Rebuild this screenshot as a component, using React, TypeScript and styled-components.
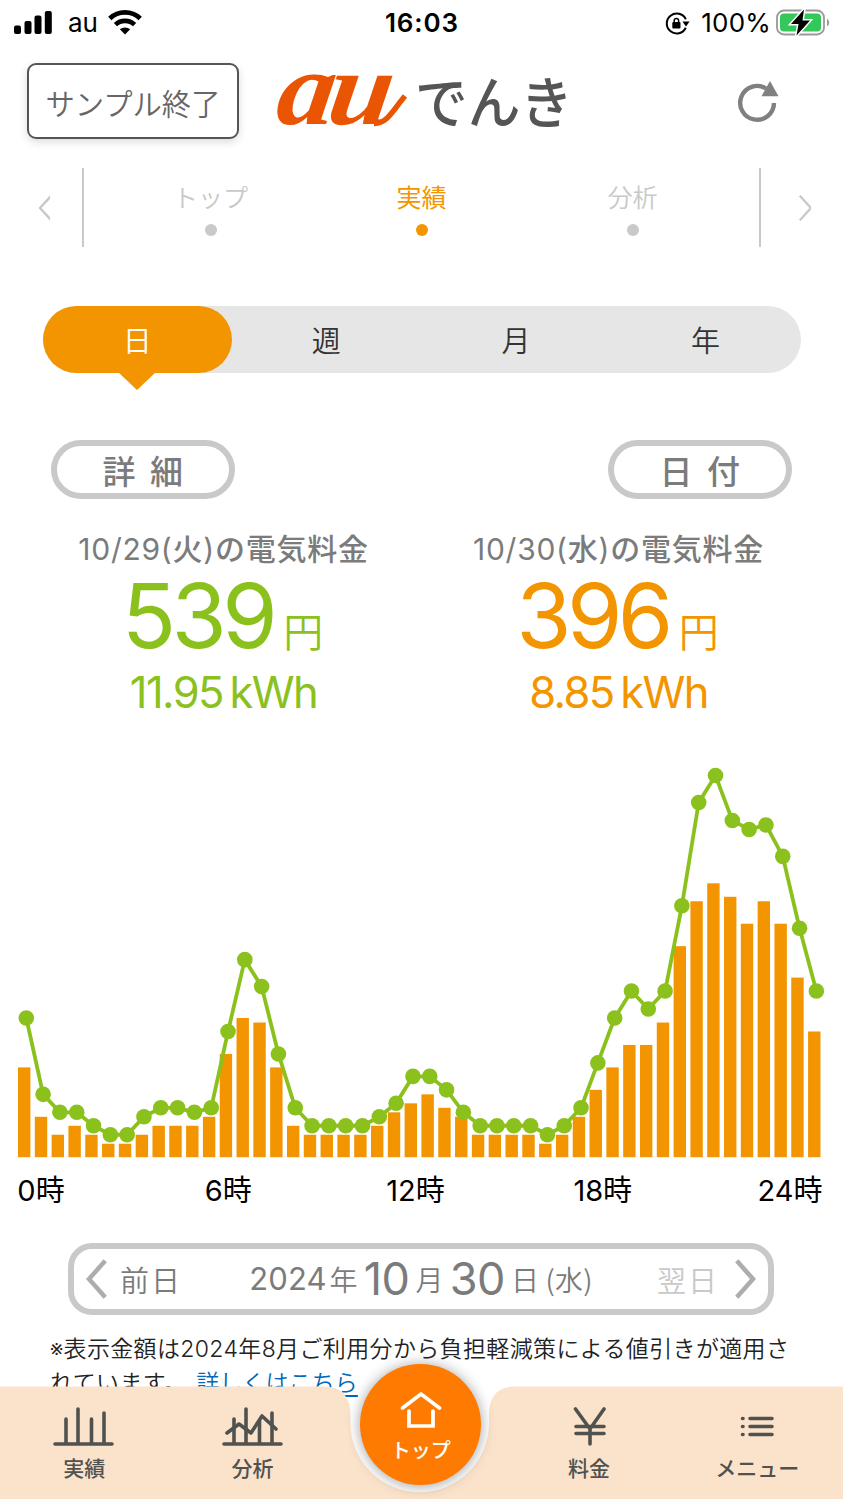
import React from 'react';
import styled, { createGlobalStyle } from 'styled-components';

const ORANGE = '#f39500';
const GREEN = '#8bc11d';

const GlobalStyle = createGlobalStyle`
  * { box-sizing: border-box; }
  html, body { margin: 0; padding: 0; background: #fff; }
  body {
    width: 843px; height: 1499px; overflow: hidden;
    font-family: Inter, "Noto Sans CJK JP", sans-serif;
    -webkit-font-smoothing: antialiased;
  }
  button { font: inherit; background: none; border: 0; padding: 0; margin: 0; color: inherit; }
`;

const Screen = styled.div`
  position: relative;
  width: 843px; height: 1499px; overflow: hidden;
  display: flex; flex-direction: column;
  background: #fff;
`;

const StatusBar = styled.header`
  height: 46px; flex: none;
  display: grid; grid-template-columns: 1fr auto 1fr; align-items: center;
  padding: 0 13px 0 14px;
  font-size: 27px; line-height: 46px; color: #000;
`;
const StatusSide = styled.div<{ $end?: boolean }>`
  display: flex; align-items: center; height: 46px;
  justify-content: ${p => (p.$end ? 'flex-end' : 'flex-start')};
`;
const Carrier = styled.span`margin: 0 10px 0 16px; font-size: 26px;`;
const Clock = styled.span`font-weight: 600; font-size: 26px; letter-spacing: 0.9px;`;
const Percent = styled.span`margin: 0 5px 0 11px; font-size: 26px; letter-spacing: 0.2px;`;

const Header = styled.div`
  height: 122px; flex: none;
  display: flex; align-items: flex-start;
  padding: 17px 62px 0 27px;
`;
const ExitButton = styled.button`
  width: 212px; height: 76px; flex: none;
  border: 2px solid #555; border-radius: 9px;
  box-shadow: 0 3px 8px rgba(0, 0, 0, 0.14);
  color: #666; font-size: 29.3px; font-weight: 350; padding-top: 2px;
  font-family: "Noto Sans CJK JP", sans-serif;
`;
const Logo = styled.svg`margin: 4px 0 0 32px; flex: none; overflow: visible;`;
const Refresh = styled.svg`margin: 15px 0 0 auto; flex: none;`;

const Pager = styled.nav`
  height: 79px; flex: none;
  display: grid; grid-template-columns: 82px 1fr 82px;
`;
const PagerArrow = styled.button<{ $side: 'left' | 'right' }>`
  display: flex; align-items: center;
  justify-content: ${p => (p.$side === 'left' ? 'flex-start' : 'flex-end')};
  padding: 0 32px 0 37px;
`;
const PagerTabs = styled.div`
  display: grid; grid-template-columns: 211px 211px 211px; justify-content: center;
  border: solid #c8c9c8; border-width: 0 2px;
`;
const PagerTab = styled.div<{ $active?: boolean }>`
  display: flex; flex-direction: column; align-items: center;
  padding-top: 11px;
  color: ${p => (p.$active ? ORANGE : '#c8c9c8')};
  font-family: "Noto Sans CJK JP", sans-serif;
  font-size: 25px; font-weight: ${p => (p.$active ? 400 : 350)};
  line-height: 34px;
  &::after {
    content: ''; width: 12px; height: 12px; border-radius: 50%;
    margin-top: 11px; background: currentColor;
  }
`;

const Segments = styled.div`
  width: 758px; height: 67px; margin: 59px 0 0 43px; flex: none;
  display: grid; grid-template-columns: 188.5px repeat(3, 189.6px);
  border-radius: 34px; background: #e6e6e6;
`;
const Segment = styled.button<{ $active?: boolean }>`
  position: relative;
  border-radius: 34px;
  background: ${p => (p.$active ? ORANGE : 'transparent')};
  color: ${p => (p.$active ? '#fff' : '#333')};
  font-family: "Noto Sans CJK JP", sans-serif; font-weight: 350;
  font-size: 29px; line-height: 67px;
  &::after {
    content: ''; display: ${p => (p.$active ? 'block' : 'none')};
    position: absolute; left: 75px; top: 66px;
    border: solid transparent; border-width: 18px 19px 0;
    border-top-color: ${ORANGE};
  }
`;

const PillRow = styled.div`
  display: flex; justify-content: space-between; flex: none;
  padding: 0 51px; margin-top: 67px;
`;
const Pill = styled.button`
  width: 184px; height: 59px;
  border: 6px solid #c8c9c8; border-radius: 30px;
  color: #7b7b7b; font-family: "Noto Sans CJK JP", sans-serif;
  font-size: 33px; font-weight: 500; line-height: 46px;
  letter-spacing: 14.5px; padding-left: 14px;
`;

const Totals = styled.div`
  display: grid; grid-template-columns: 395px 395px;
  padding-left: 26px; margin-top: 29px; height: 188px; flex: none;
`;
const Total = styled.section<{ $color: string }>`
  display: flex; flex-direction: column; align-items: center;
  color: ${p => p.$color};
`;
const TotalTitle = styled.h2`
  margin: 0; height: 42px; line-height: 42px;
  font-size: 30px; font-weight: 430; color: #7b7b7b; white-space: nowrap;
  letter-spacing: 0.75px;
`;
const TitleKanji = styled.span`
  font-family: "Noto Sans CJK JP", sans-serif; font-weight: 500; line-height: 1;
`;
const Price = styled.div`
  display: flex; align-items: baseline;
  height: 94px; line-height: 92px; font-size: 89.5px; letter-spacing: -4.6px;
`;
const Yen = styled.span`
  font-family: "Noto Sans CJK JP", sans-serif; font-weight: 350;
  font-size: 40px; line-height: 60px; letter-spacing: 0; margin: 0 2px 0 10px;
  position: relative; top: -1px;
`;
const Usage = styled.div`
  font-size: 43.5px; line-height: 56px; letter-spacing: -1.6px; word-spacing: -4px;
`;

const Chart = styled.svg`display: block; flex: none; margin-top: 43px;`;
const Axis = styled.div`
  display: flex; justify-content: space-between; flex: none;
  height: 64px; padding: 0 53px 0 41px;
  font-size: 29px; line-height: 65px; color: #000;
`;
const Tick = styled.span`
  width: 0; display: flex; justify-content: center; white-space: nowrap;
`;

const DatePicker = styled.div`
  width: 706px; height: 72px; margin: 21px 0 0 68px; flex: none;
  display: flex; align-items: center;
  border: 6px solid #c8c9c8; border-radius: 24px;
  padding: 0 12px; color: #7b7b7b;
  font-size: 29px; white-space: nowrap;
`;
const DayLabel = styled.span<{ $muted?: boolean }>`
  font-family: "Noto Sans CJK JP", sans-serif; font-weight: 350;
  font-size: 29px; letter-spacing: 2px; line-height: 58px;
  margin: ${p => (p.$muted ? '0 16px 0 0' : '0 0 0 13px')};
  color: ${p => (p.$muted ? '#c8c9c8' : '#7b7b7b')};
`;
const DateText = styled.div`
  display: flex; align-items: center; margin: 0 auto; padding-left: 3px;
  line-height: 58px; font-size: 31px; letter-spacing: 0.1px;
`;
const BigNumber = styled.b`font-size: 45px; font-weight: 400; letter-spacing: -0.5px; margin: 0 6px;`;
const Kanji = styled.span`
  font-family: "Noto Sans CJK JP", sans-serif; font-weight: 350; font-size: 28px;
  letter-spacing: 0.2px;
  &:first-of-type { margin-left: 3px; }
`;

const Note = styled.p`
  margin: 17px 0 0 50px; width: 760px; flex: none;
  font-family: Inter, "Noto Sans CJK JP", sans-serif;
  font-size: 23px; font-weight: 350; line-height: 34px; color: #222; white-space: nowrap;
  letter-spacing: 0.36px;
  a { color: #0068b7; text-decoration: underline; text-underline-offset: 4px; margin-left: 9px; letter-spacing: 0.1px; }
`;

const BottomBar = styled.nav`
  position: absolute; left: 0; bottom: 0; width: 843px; height: 140px;
`;
const BarShape = styled.svg`position: absolute; inset: 0;`;
const BarItems = styled.div`
  position: relative; height: 140px; padding-top: 27px;
  display: grid; grid-template-columns: repeat(5, 168.3px);
`;
const BarItem = styled.button`
  display: flex; flex-direction: column; align-items: center; justify-content: flex-start;
  color: #505250; font-family: "Noto Sans CJK JP", sans-serif;
  font-size: 21px; font-weight: 500; line-height: 32px;
  svg { display: block; margin-top: 20px; margin-bottom: 3px; }
`;
const HomeButton = styled.button`
  align-self: start; justify-self: center;
  width: 121px; height: 121px; border-radius: 50%; margin-top: -22px;
  background: #ff7a00; color: #fff;
  box-shadow: 0 1px 14px rgba(0, 0, 0, 0.38);
  display: flex; flex-direction: column; align-items: center;
  font-family: "Noto Sans CJK JP", sans-serif; font-size: 20px; font-weight: 500; line-height: 28px;
  svg { display: block; margin: 26px 0 8px; }
`;

const today = [20, 9, 5, 7, 5, 3, 3, 5, 7, 7, 7, 9, 23, 31, 30, 20, 7, 5, 5, 5, 5, 7, 10, 12,
  14, 11, 9, 5, 5, 5, 5, 3, 5, 9, 15, 20, 25, 25, 30, 47, 57, 61, 58, 52, 57, 52, 40, 28];
const yesterday = [31, 14, 10, 10, 7, 5, 5, 9, 11, 11, 10, 11, 28, 44, 38, 23, 11, 7, 7, 7, 7, 9, 12, 18,
  18, 15, 10, 7, 7, 7, 7, 5, 7, 11, 21, 31, 37, 33, 37, 56, 79, 85, 75, 73, 74, 67, 51, 37];

const UNIT = 4.49;
const STEP = 16.81;
const BASE = 398.2;

function UsageChart() {
  const points = yesterday.map((v, i) => ({ x: 26.3 + i * STEP, y: BASE - v * UNIT }));
  return (
    <Chart width="843" height="399" viewBox="0 0 843 399">
      {today.map((v, i) => (
        <rect key={i} x={18 + i * STEP} y={BASE - v * UNIT} width="12.4" height={v * UNIT} fill={ORANGE} />
      ))}
      <polyline points={points.map(p => `${p.x},${p.y}`).join(' ')} fill="none" stroke={GREEN} strokeWidth="3.8" strokeLinejoin="round" />
      {points.map((p, i) => <circle key={i} cx={p.x} cy={p.y} r="7.8" fill={GREEN} />)}
    </Chart>
  );
}

function Chevron({ dir, w, h, stroke, color }: { dir: 'left' | 'right'; w: number; h: number; stroke: number; color: string }) {
  const pts = dir === 'left' ? `${w - 1.8},1.8 3,${h / 2} ${w - 1.8},${h - 1.8}` : `1.8,1.8 ${w - 3},${h / 2} 1.8,${h - 1.8}`;
  return <svg width={w} height={h}><polyline points={pts} fill="none" stroke={color} strokeWidth={stroke} /></svg>;
}

function StatusIcons() {
  return (
    <>
      <svg width="25" height="25" viewBox="0 0 25 25">
        <path d="M20.8 8.2A10 10 0 1 0 20.8 16.8" fill="none" stroke="#000" strokeWidth="2" />
        <path d="M17.4 10.6h7.2l-3.6 5z" fill="#000" />
        <rect x="7.3" y="11" width="8.2" height="6.4" rx="1" fill="#000" />
        <path d="M9.2 11.5V9.6a2.2 2.2 0 0 1 4.4 0v1.9" fill="none" stroke="#000" strokeWidth="1.5" />
      </svg>
      <Percent>100%</Percent>
      <svg width="54" height="28" viewBox="0 0 54 28">
        <rect x="1" y="1.5" width="47" height="24" rx="7" fill="#fff" stroke="#999" strokeWidth="1.8" />
        <rect x="4" y="4.5" width="41" height="18" rx="4" fill="#34c759" />
        <path d="M51 9.5v8q2.2-1.4 2.2-4T51 9.5z" fill="#999" />
        <path d="M28 0.5L15 15H22.5L20.5 26.5L34 11.5H26.500z" fill="#000" stroke="#fff" strokeWidth="3" paintOrder="stroke" />
      </svg>
    </>
  );
}

export default function App() {
  return (
    <>
      <GlobalStyle />
      <Screen>
        <StatusBar>
          <StatusSide>
            <svg width="38" height="25" viewBox="0 0 38 25">
              <rect x="0" y="14.5" width="7" height="8.5" rx="2" />
              <rect x="10.5" y="10" width="7" height="13" rx="2" />
              <rect x="20.5" y="4.5" width="7" height="18.5" rx="2" />
              <rect x="30.8" y="0" width="7" height="23" rx="2" />
            </svg>
            <Carrier>au</Carrier>
            <svg width="34" height="26" viewBox="0 0 34 26">
              <path d="M1.8 8.5A22 22 0 0 1 32.2 8.5" fill="none" stroke="#000" strokeWidth="4.8" />
              <path d="M7.4 14.7A14 14 0 0 1 26.6 14.7" fill="none" stroke="#000" strokeWidth="4.6" />
              <path d="M11.8 19.3A8 8 0 0 1 22.2 19.3L17 24.5z" />
            </svg>
          </StatusSide>
          <Clock>16:03</Clock>
          <StatusSide $end><StatusIcons /></StatusSide>
        </StatusBar>

        <Header>
          <ExitButton>サンプル終了</ExitButton>
          <Logo width="304" height="66" viewBox="0 0 304 66">
            <text transform="translate(3 57) skewX(-8) scale(1.1 1)" x="0" y="0" letterSpacing="-6" fontFamily="Liberation Serif" fontWeight="700" fontStyle="italic" fontSize="105" fill="#ea5504">au</text>
            <path d="M103 56.500C116 57 122 43 134 29" fill="none" stroke="#ea5504" strokeWidth="5.5" />
            <text x="144" y="56" textLength="158" lengthAdjust="spacingAndGlyphs" fontFamily="Noto Sans CJK JP" fontWeight="500" fontSize="56" fill="#555">でんき</text>
          </Logo>
          <Refresh width="44" height="46" viewBox="0 0 44 46">
            <path d="M29 10.5A16.9 16.9 0 1 0 37 25" fill="none" stroke="#808080" strokeWidth="4.4" />
            <path d="M33 3L41.5 18.2H24.500z" fill="#808080" />
          </Refresh>
        </Header>

        <Pager>
          <PagerArrow $side="left"><Chevron dir="left" w={16} h={28} stroke={2.4} color="#c8c9c8" /></PagerArrow>
          <PagerTabs>
            <PagerTab>トップ</PagerTab>
            <PagerTab $active>実績</PagerTab>
            <PagerTab>分析</PagerTab>
          </PagerTabs>
          <PagerArrow $side="right"><Chevron dir="right" w={16} h={28} stroke={2.4} color="#c8c9c8" /></PagerArrow>
        </Pager>

        <Segments>
          <Segment $active>日</Segment>
          <Segment>週</Segment>
          <Segment>月</Segment>
          <Segment>年</Segment>
        </Segments>

        <PillRow>
          <Pill>詳細</Pill>
          <Pill>日付</Pill>
        </PillRow>

        <Totals>
          <Total $color={GREEN}>
            <TotalTitle>10/29(<TitleKanji>火</TitleKanji>)<TitleKanji>の電気料金</TitleKanji></TotalTitle>
            <Price>539<Yen>円</Yen></Price>
            <Usage>11.95 kWh</Usage>
          </Total>
          <Total $color={ORANGE}>
            <TotalTitle>10/30(<TitleKanji>水</TitleKanji>)<TitleKanji>の電気料金</TitleKanji></TotalTitle>
            <Price>396<Yen>円</Yen></Price>
            <Usage>8.85 kWh</Usage>
          </Total>
        </Totals>

        <UsageChart />
        <Axis>
          {['0時', '6時', '12時', '18時', '24時'].map(t => <Tick key={t}>{t}</Tick>)}
        </Axis>

        <DatePicker>
          <Chevron dir="left" w={21} h={40} stroke={4.5} color="#adadad" />
          <DayLabel>前日</DayLabel>
          <DateText>
            2024<Kanji>年</Kanji><BigNumber>10</BigNumber><Kanji>月</Kanji><BigNumber>30</BigNumber><Kanji>日 (水)</Kanji>
          </DateText>
          <DayLabel $muted>翌日</DayLabel>
          <Chevron dir="right" w={21} h={40} stroke={4.5} color="#adadad" />
        </DatePicker>

        <Note>
          ※表示金額は2024年8月ご利用分から負担軽減策による値引きが適用さ<br />
          れています。<a>詳しくはこちら</a>
        </Note>

        <BottomBar>
          <BarShape width="843" height="140" viewBox="0 0 843 140">
            <path d="M0 27.5H324Q350 27.5 350.5 56V64A69.25 69.25 0 0 0 489 64V56Q489 27.5 515 27.5H843V140H0z" fill="#fbe3cb" />
          </BarShape>
          <BarItems>
            <BarItem>
              <svg width="62" height="42" viewBox="0 0 62 42" fill="none" stroke="#505250" strokeWidth="3.6" strokeLinecap="round">
                <path d="M2 38H59M13 38V13M25 38V3M38.5 38V13M51 38V7" />
              </svg>
              実績
            </BarItem>
            <BarItem>
              <svg width="62" height="42" viewBox="0 0 62 42" fill="none" stroke="#505250" strokeWidth="3.6" strokeLinecap="round" strokeLinejoin="round">
                <path d="M3 38H60M13 38V13M25 38V3M38.5 38V15M51 38V7" />
                <path d="M6 27L18 18L30 27L41 10L55 23" />
              </svg>
              分析
            </BarItem>
            <HomeButton>
              <svg width="42" height="38" viewBox="0 0 42 38" fill="none" stroke="#fff" strokeWidth="3.7" strokeLinecap="round">
                <path d="M2.5 18L21 4L39.5 18M9 21V36H33V21" />
              </svg>
              トップ
            </HomeButton>
            <BarItem>
              <svg width="34" height="42" viewBox="0 0 34 42" fill="none" stroke="#505250" strokeWidth="3.6" strokeLinecap="round">
                <path d="M3.5 3L18 23L32 3M18 23V38M4 20.5H32M4 27.5H32" />
              </svg>
              料金
            </BarItem>
            <BarItem>
              <svg width="34" height="42" viewBox="0 0 34 42" fill="none" stroke="#505250" strokeWidth="3.6" strokeLinecap="round">
                <path d="M10 12.5H32M10 20.5H32M10 28.5H32M2.5 12.5H3M2.5 20.5H3M2.5 28.5H3" />
              </svg>
              メニュー
            </BarItem>
          </BarItems>
        </BottomBar>
      </Screen>
    </>
  );
}
